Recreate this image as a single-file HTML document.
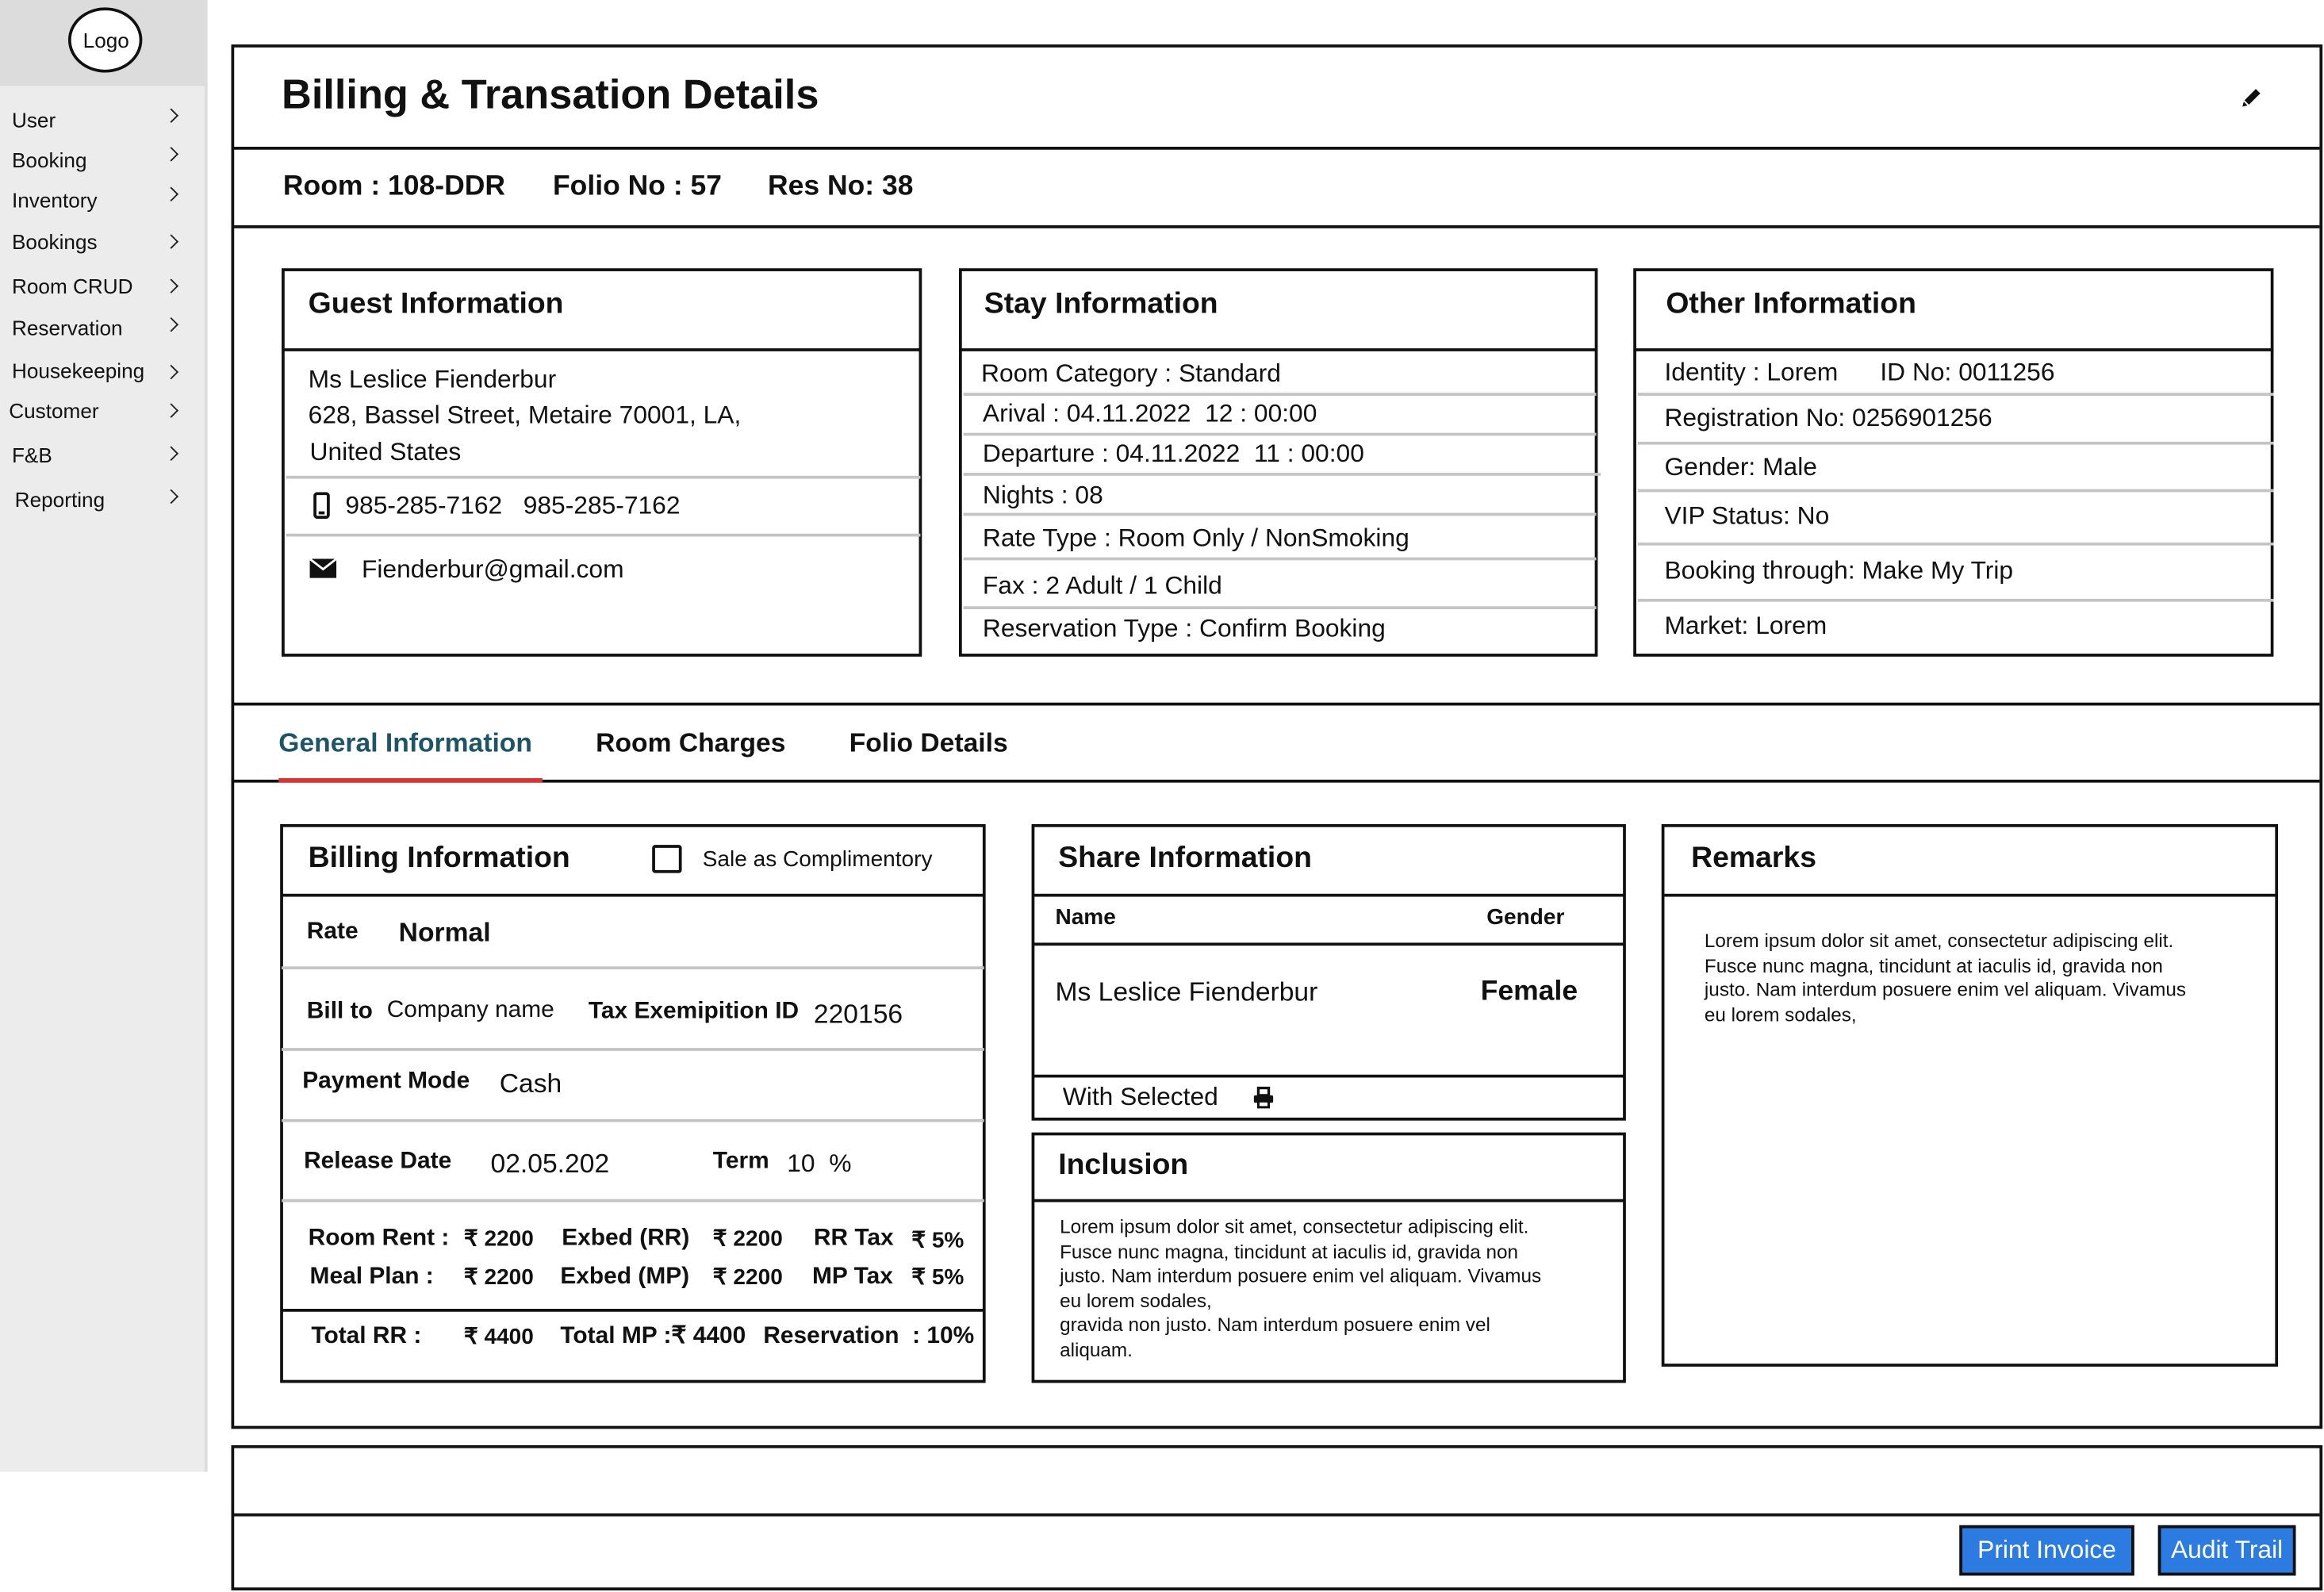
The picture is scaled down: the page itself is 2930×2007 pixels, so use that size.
<!DOCTYPE html>
<html><head><meta charset="utf-8"><style>
html,body{margin:0;padding:0;background:#fff;overflow:hidden;width:2930px;height:2006px}
#w{position:absolute;left:0;top:0;width:1568px;height:1074px;transform:scale(1.86862);transform-origin:0 0;font-family:"Liberation Sans",sans-serif;color:#111}
.a{position:absolute}
.t{position:absolute;transform:translateY(-50%);white-space:nowrap;line-height:1}
.b{font-weight:bold}
.box{position:absolute;border:2.5px solid #111;box-sizing:border-box}
.hl{position:absolute;height:2px;background:#111}
.gl{position:absolute;height:2px;background:#c4c4c4}
.m{font-size:14px;left:8px}
.ch{position:absolute;left:112px;width:6px;height:6px;border-right:1.3px solid #222;border-top:1.3px solid #222;transform:translateY(-50%) rotate(45deg)}
.n{font-family:"Liberation Sans Narrow","Liberation Sans",sans-serif}
.btn{position:absolute;background:#2b7be0;border:2.5px solid #111;box-sizing:border-box;color:#fff;font-size:17px;text-align:center;font-family:"Liberation Sans Narrow","Liberation Sans",sans-serif}
</style></head><body><div id="w">
<!-- sidebar -->
<div class="a" style="left:0;top:0;width:138px;height:993px;background:#ececec;border-right:2px solid #ddd"></div>
<div class="a" style="left:0;top:0;width:138px;height:58px;background:#dcdcdc"></div>
<div class="a" style="left:46px;top:5px;width:50px;height:44px;border:2px solid #111;border-radius:50%;background:#fff;box-sizing:border-box"></div>
<div class="t" style="left:56px;top:27px;font-size:14px">Logo</div>
<div class="t m" style="top:81px">User</div><div class="ch" style="top:78px"></div>
<div class="t m" style="top:108px">Booking</div><div class="ch" style="top:104px"></div>
<div class="t m" style="top:135px">Inventory</div><div class="ch" style="top:131px"></div>
<div class="t m" style="top:163px">Bookings</div><div class="ch" style="top:163px"></div>
<div class="t m" style="top:193px">Room CRUD</div><div class="ch" style="top:193px"></div>
<div class="t m" style="top:221px">Reservation</div><div class="ch" style="top:219px"></div>
<div class="t m" style="top:250px">Housekeeping</div><div class="ch" style="top:251px"></div>
<div class="t m" style="top:277px;left:6px">Customer</div><div class="ch" style="top:277px"></div>
<div class="t m" style="top:307px">F&amp;B</div><div class="ch" style="top:306px"></div>
<div class="t m" style="top:337px;left:10px">Reporting</div><div class="ch" style="top:335px"></div>

<!-- main panel -->
<div class="box" style="left:156px;top:30px;width:1411px;height:934px"></div>
<div class="t b" style="left:190px;top:64px;font-size:28px">Billing &amp; Transation Details</div>
<svg class="a" style="left:1510px;top:57px" width="18" height="18" viewBox="0 0 18 18"><path d="M3 15 L4 11 L12 3 L15 6 L7 14 Z" fill="#111"/><path d="M4 11 L7 14" stroke="#fff" stroke-width="1"/></svg>
<div class="hl" style="left:157px;top:99px;width:1408px"></div>
<div class="t b" style="left:191px;top:126px;font-size:19px">Room : 108-DDR</div>
<div class="t b" style="left:373px;top:126px;font-size:19px">Folio No : 57</div>
<div class="t b" style="left:518px;top:126px;font-size:19px">Res No: 38</div>
<div class="hl" style="left:157px;top:152px;width:1408px"></div>

<!-- Guest -->
<div class="box" style="left:190px;top:181px;width:432px;height:262px"></div>
<div class="t b" style="left:208px;top:205px;font-size:20px">Guest Information</div>
<div class="hl" style="left:191px;top:235px;width:430px"></div>
<div class="t" style="left:208px;top:256px;font-size:17px">Ms Leslice Fienderbur</div>
<div class="t" style="left:208px;top:280px;font-size:17px">628, Bassel Street, Metaire 70001, LA,</div>
<div class="t" style="left:209px;top:305px;font-size:17px">United States</div>
<div class="gl" style="left:193px;top:321px;width:428px"></div>
<svg class="a" style="left:211px;top:332px" width="12" height="18" viewBox="0 0 12 18"><rect x="1.5" y="1" width="9" height="16" rx="1.5" fill="none" stroke="#111" stroke-width="2"/><rect x="4" y="13" width="4" height="2" fill="#111"/></svg>
<div class="t" style="left:233px;top:341px;font-size:17px">985-285-7162 &nbsp;&nbsp;985-285-7162</div>
<div class="gl" style="left:193px;top:360px;width:428px"></div>
<svg class="a" style="left:209px;top:377px" width="18" height="13" viewBox="0 0 18 13"><rect x="0" y="0" width="18" height="13" fill="#111"/><path d="M0 0 L9 7 L18 0" fill="none" stroke="#fff" stroke-width="1.5"/></svg>
<div class="t" style="left:244px;top:384px;font-size:17px">Fienderbur@gmail.com</div>

<!-- Stay -->
<div class="box" style="left:647px;top:181px;width:431px;height:262px"></div>
<div class="t b" style="left:664px;top:205px;font-size:20px">Stay Information</div>
<div class="hl" style="left:648px;top:235px;width:429px"></div>
<div class="t" style="left:662px;top:252px;font-size:17px">Room Category : Standard</div>
<div class="gl" style="left:650px;top:265px;width:427px"></div>
<div class="t" style="left:663px;top:279px;font-size:17px">Arival : 04.11.2022 &nbsp;12 : 00:00</div>
<div class="gl" style="left:650px;top:292px;width:427px"></div>
<div class="t" style="left:663px;top:306px;font-size:17px">Departure : 04.11.2022 &nbsp;11 : 00:00</div>
<div class="gl" style="left:650px;top:319px;width:430px"></div>
<div class="t" style="left:663px;top:334px;font-size:17px">Nights : 08</div>
<div class="gl" style="left:650px;top:346px;width:427px"></div>
<div class="t" style="left:663px;top:363px;font-size:17px">Rate Type : Room Only / NonSmoking</div>
<div class="gl" style="left:650px;top:376px;width:427px"></div>
<div class="t" style="left:663px;top:395px;font-size:17px">Fax : 2 Adult / 1 Child</div>
<div class="gl" style="left:650px;top:409px;width:427px"></div>
<div class="t" style="left:663px;top:424px;font-size:17px">Reservation Type : Confirm Booking</div>

<!-- Other -->
<div class="box" style="left:1102px;top:181px;width:432px;height:262px"></div>
<div class="t b" style="left:1124px;top:205px;font-size:20px">Other Information</div>
<div class="hl" style="left:1103px;top:235px;width:431px"></div>
<div class="t" style="left:1123px;top:251px;font-size:17px">Identity : Lorem &nbsp;&nbsp;&nbsp;&nbsp;&nbsp;ID No: 0011256</div>
<div class="gl" style="left:1105px;top:265px;width:429px"></div>
<div class="t" style="left:1123px;top:282px;font-size:17px">Registration No: 0256901256</div>
<div class="gl" style="left:1105px;top:298px;width:429px"></div>
<div class="t" style="left:1123px;top:315px;font-size:17px">Gender: Male</div>
<div class="gl" style="left:1105px;top:330px;width:429px"></div>
<div class="t" style="left:1123px;top:348px;font-size:17px">VIP Status: No</div>
<div class="gl" style="left:1105px;top:366px;width:429px"></div>
<div class="t" style="left:1123px;top:385px;font-size:17px">Booking through: Make My Trip</div>
<div class="gl" style="left:1105px;top:404px;width:429px"></div>
<div class="t" style="left:1123px;top:422px;font-size:17px">Market: Lorem</div>

<!-- tabs -->
<div class="hl" style="left:157px;top:474px;width:1408px"></div>
<div class="t b" style="left:188px;top:501px;font-size:18px;color:#1d5566">General Information</div>
<div class="t b" style="left:402px;top:501px;font-size:18px">Room Charges</div>
<div class="t b" style="left:573px;top:501px;font-size:18px">Folio Details</div>
<div class="hl" style="left:157px;top:526px;width:1408px"></div>
<div class="a" style="left:188px;top:525px;width:178px;height:3px;background:#e03030"></div>

<!-- Billing -->
<div class="box n" style="left:189px;top:556px;width:476px;height:377px"></div>
<div class="t b n" style="left:208px;top:579px;font-size:20px">Billing Information</div>
<div class="a" style="left:440px;top:570px;width:20px;height:19px;border:2.5px solid #111;border-radius:2px;box-sizing:border-box"></div>
<div class="t n" style="left:474px;top:580px;font-size:15px">Sale as Complimentory</div>
<div class="hl" style="left:190px;top:603px;width:474px"></div>
<div class="t b n" style="left:207px;top:629px;font-size:16px">Rate</div>
<div class="t b n" style="left:269px;top:629px;font-size:18px">Normal</div>
<div class="gl" style="left:190px;top:652px;width:474px"></div>
<div class="t b n" style="left:207px;top:683px;font-size:16px">Bill to</div>
<div class="t n" style="left:261px;top:682px;font-size:16px">Company name</div>
<div class="t b n" style="left:397px;top:683px;font-size:16px">Tax Exemipition ID</div>
<div class="t n" style="left:549px;top:684px;font-size:18px">220156</div>
<div class="gl" style="left:190px;top:707px;width:474px"></div>
<div class="t b n" style="left:204px;top:730px;font-size:16px">Payment Mode</div>
<div class="t n" style="left:337px;top:731px;font-size:18px">Cash</div>
<div class="gl" style="left:190px;top:755px;width:474px"></div>
<div class="t b n" style="left:205px;top:784px;font-size:16px">Release Date</div>
<div class="t n" style="left:331px;top:785px;font-size:18px">02.05.202</div>
<div class="t b n" style="left:481px;top:784px;font-size:16px">Term</div>
<div class="t n" style="left:531px;top:785px;font-size:17px">10 &nbsp;%</div>
<div class="gl" style="left:190px;top:809px;width:474px"></div>
<div class="t b n" style="left:208px;top:836px;font-size:16px">Room Rent :</div>
<div class="t b n" style="left:313px;top:836px;font-size:15px">₹ 2200</div>
<div class="t b n" style="left:379px;top:836px;font-size:16px">Exbed (RR)</div>
<div class="t b n" style="left:481px;top:836px;font-size:15px">₹ 2200</div>
<div class="t b n" style="left:549px;top:836px;font-size:16px">RR Tax</div>
<div class="t b n" style="left:615px;top:837px;font-size:15px">₹ 5%</div>
<div class="t b n" style="left:209px;top:862px;font-size:16px">Meal Plan :</div>
<div class="t b n" style="left:313px;top:862px;font-size:15px">₹ 2200</div>
<div class="t b n" style="left:378px;top:862px;font-size:16px">Exbed (MP)</div>
<div class="t b n" style="left:481px;top:862px;font-size:15px">₹ 2200</div>
<div class="t b n" style="left:548px;top:862px;font-size:16px">MP Tax</div>
<div class="t b n" style="left:615px;top:862px;font-size:15px">₹ 5%</div>
<div class="hl" style="left:190px;top:883px;width:474px"></div>
<div class="t b n" style="left:210px;top:902px;font-size:16px">Total RR :</div>
<div class="t b n" style="left:313px;top:902px;font-size:15px">₹ 4400</div>
<div class="t b n" style="left:378px;top:902px;font-size:16px">Total MP :₹ 4400</div>
<div class="t b n" style="left:515px;top:902px;font-size:16px">Reservation &nbsp;: 10%</div>

<!-- Share -->
<div class="box" style="left:696px;top:556px;width:401px;height:200px"></div>
<div class="t b n" style="left:714px;top:579px;font-size:20px">Share Information</div>
<div class="hl" style="left:697px;top:603px;width:399px"></div>
<div class="t b n" style="left:712px;top:619px;font-size:15px">Name</div>
<div class="t b n" style="left:1003px;top:619px;font-size:15px">Gender</div>
<div class="hl" style="left:697px;top:636px;width:399px"></div>
<div class="t n" style="left:712px;top:669px;font-size:18px">Ms Leslice Fienderbur</div>
<div class="t b n" style="left:999px;top:669px;font-size:19px">Female</div>
<div class="hl" style="left:697px;top:725px;width:399px"></div>
<div class="t n" style="left:717px;top:740px;font-size:17px">With Selected</div>
<svg class="a" style="left:845px;top:733px" width="15" height="15" viewBox="0 0 15 15"><rect x="4" y="1" width="7" height="5" fill="none" stroke="#111" stroke-width="1.8"/><rect x="1" y="6" width="13" height="5" rx="1" fill="#111"/><rect x="4" y="10" width="7" height="4" fill="#fff" stroke="#111" stroke-width="1.6"/></svg>

<!-- Inclusion -->
<div class="box" style="left:696px;top:764px;width:401px;height:169px"></div>
<div class="t b n" style="left:714px;top:786px;font-size:20px">Inclusion</div>
<div class="hl" style="left:697px;top:809px;width:399px"></div>
<div class="a n" style="left:715px;top:820px;font-size:13px;line-height:16.6px;width:370px">Lorem ipsum dolor sit amet, consectetur adipiscing elit.<br>Fusce nunc magna, tincidunt at iaculis id, gravida non<br>justo. Nam interdum posuere enim vel aliquam. Vivamus<br>eu lorem sodales,<br>gravida non justo. Nam interdum posuere enim vel<br>aliquam.</div>

<!-- Remarks -->
<div class="box" style="left:1121px;top:556px;width:416px;height:366px"></div>
<div class="t b n" style="left:1141px;top:579px;font-size:20px">Remarks</div>
<div class="hl" style="left:1122px;top:603px;width:414px"></div>
<div class="a n" style="left:1150px;top:627px;font-size:13px;line-height:16.6px;width:370px">Lorem ipsum dolor sit amet, consectetur adipiscing elit.<br>Fusce nunc magna, tincidunt at iaculis id, gravida non<br>justo. Nam interdum posuere enim vel aliquam. Vivamus<br>eu lorem sodales,</div>

<!-- footer -->
<div class="box" style="left:156px;top:975px;width:1411px;height:98px"></div>
<div class="hl" style="left:157px;top:1021px;width:1408px"></div>
<div class="btn" style="left:1322px;top:1029px;width:118px;height:34px;line-height:29px">Print Invoice</div>
<div class="btn" style="left:1456px;top:1029px;width:93px;height:34px;line-height:29px">Audit Trail</div>
</div></body></html>
